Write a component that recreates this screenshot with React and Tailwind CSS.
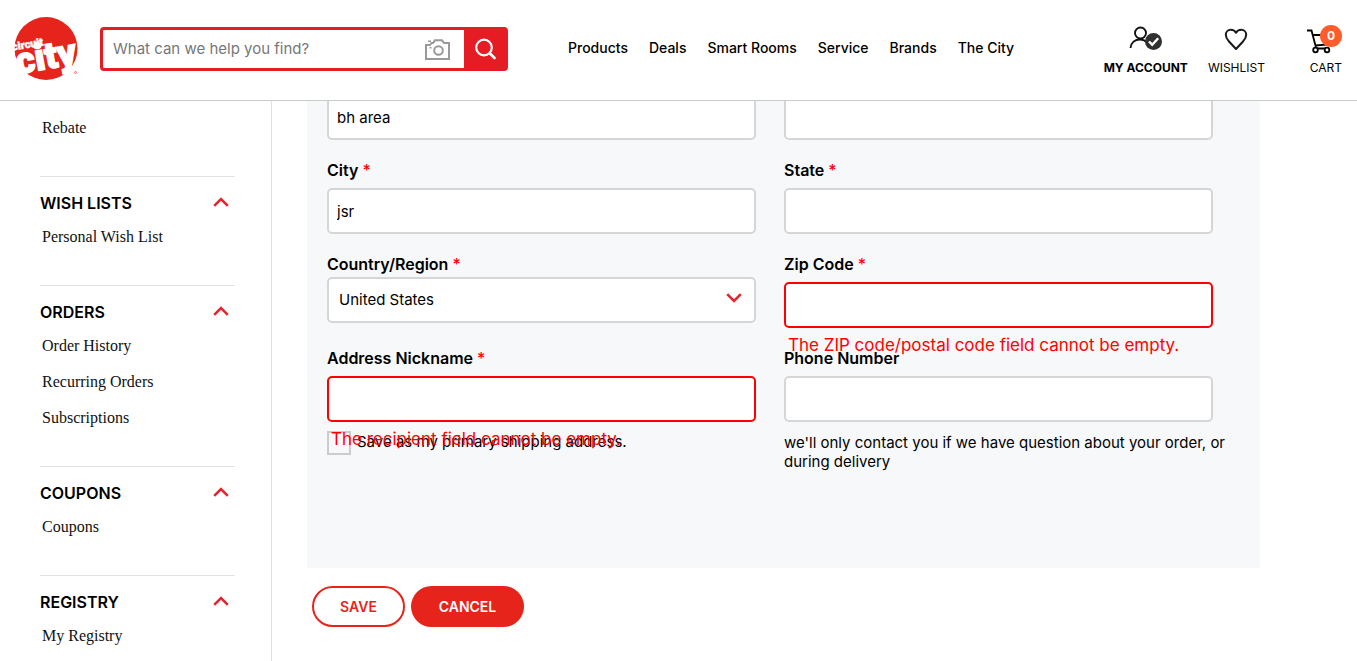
import { useState } from "react";

const navLinks = ["Products", "Deals", "Smart Rooms", "Service", "Brands", "The City"];

const sections = [
  { title: "WISH LISTS", items: ["Personal Wish List"] },
  { title: "ORDERS", items: ["Order History", "Recurring Orders", "Subscriptions"] },
  { title: "COUPONS", items: ["Coupons"] },
  { title: "REGISTRY", items: ["My Registry"] },
];

function Logo() {
  return (
    <svg viewBox="0 0 66 66" className="h-[66px] w-[66px] overflow-visible" role="img" aria-label="Circuit City">
      <circle cx="32" cy="32.5" r="31.5" fill="#e6241b" />
      <g transform="rotate(-10 32 40)" fill="#fff" stroke="#fff" fontFamily="Roboto, 'Liberation Sans', sans-serif" fontWeight="900">
        <text x="0" y="29" fontSize="11" strokeWidth="0.4">circuit</text>
        <text x="1" y="53" fontSize="37" strokeWidth="1.4">city</text>
      </g>
      <circle cx="61.5" cy="56.5" r="1" fill="none" stroke="#e6241b" strokeWidth="0.6" />
    </svg>
  );
}

function Chevron({ up }) {
  return (
    <svg viewBox="0 0 16 10" className="h-[10px] w-4" fill="none" stroke="#e3262e" strokeWidth="2.6" aria-hidden="true">
      <path d={up ? "M1.2 8.8 8 2l6.8 6.8" : "M1.2 1.2 8 8l6.8-6.8"} />
    </svg>
  );
}

function Field({ id, label, required, value = "", error, children }) {
  const [text, setText] = useState(value);
  return (
    <div className="relative">
      {label && (
        <label htmlFor={id} className={`block text-[16px] leading-6 font-semibold ${children ? "mb-px" : "mb-1.5"}`}>
          {label} {required && <span className="font-medium text-[#f00]">*</span>}
        </label>
      )}
      {children || (
        <input
          id={id}
          aria-label={label ? undefined : id}
          value={text}
          onChange={(e) => setText(e.target.value)}
          className={`block h-[46px] w-full rounded-[5px] border-2 bg-white px-2 text-[15px] outline-none ${error ? "border-[#f00]" : "border-[#d5d6d7]"}`}
        />
      )}
      {error && (
        <p className="absolute top-full left-1 z-10 mt-[5px] text-[17px] leading-6 whitespace-nowrap text-[#f00]">{error}</p>
      )}
    </div>
  );
}

function Header() {
  return (
    <header className="relative z-20 flex h-[101px] shrink-0 items-start border-b border-[#c6cbcb] bg-white">
      <a href="#home" className="mt-4 ml-3.5 shrink-0"><Logo /></a>
      <form role="search" className="mt-[27px] ml-5 flex h-11 w-[408px] shrink-0 overflow-hidden rounded border-[3px] border-[#e61c24] bg-[#e61c24]" onSubmit={(e) => e.preventDefault()}>
        <input aria-label="Search" placeholder="What can we help you find?" className="min-w-0 flex-1 bg-white pl-2.5 text-[15px] outline-none placeholder:text-[#777]" />
        <button type="button" aria-label="Search by image" className="bg-white pt-px pr-3.5">
          <svg viewBox="0 0 25 21" className="h-[21px] w-[25px]" fill="none" stroke="#999" strokeWidth="2" aria-hidden="true">
            <path d="M1 6V20H24V4H19L17 1.3H10L8 4H6.500L5 6H1Z" />
            <circle cx="13.500" cy="11.500" r="4.300" />
            <path d="M3 2.200h3M4.500 8.800h2" strokeWidth="1.500" />
          </svg>
        </button>
        <button aria-label="Submit search" className="flex w-[41px] items-center justify-center">
          <svg viewBox="0 0 22 22" className="h-[22px] w-[22px]" fill="none" stroke="#fff" strokeWidth="2.200" strokeLinecap="round" aria-hidden="true">
            <circle cx="10" cy="9.500" r="7.800" />
            <path d="m16 15.500 4.500 4.500" strokeWidth="2.600" />
          </svg>
        </button>
      </form>
      <nav className="mt-9 ml-[60px] flex gap-[21px] text-[14px] leading-6 font-medium whitespace-nowrap">
        {navLinks.map((n) => <a key={n} href="#nav">{n}</a>)}
      </nav>
      <div className="mt-6 mr-[15px] ml-auto flex gap-5 text-[12px] leading-4 whitespace-nowrap">
        <a href="#account" className="flex flex-col items-center gap-1 font-bold">
          <svg viewBox="0 0 34 32" className="h-8 w-[34px]" fill="none" stroke="#111" strokeWidth="1.900" aria-hidden="true">
            <circle cx="11.500" cy="9" r="5.500" />
            <path d="M1.500 24C2 18.500 6 15.500 11 15.500c3 0 5 1 6.500 2.500" />
            <circle cx="24.500" cy="17.500" r="8.500" fill="#2f3130" stroke="none" />
            <path d="m20 17.500 3.200 3.200 6-6.500" stroke="#fff" strokeWidth="2.400" />
          </svg>
          MY ACCOUNT
        </a>
        <a href="#wishlist" className="flex flex-col items-center gap-1">
          <svg viewBox="0 0 24 32" className="h-8 w-6" fill="none" stroke="#1a1a1a" strokeWidth="2" strokeLinejoin="round" aria-hidden="true">
            <path d="M12 25 5 17.500C2.500 14.800 1.800 12.800 1.800 10.800 1.800 7.800 4 5.800 6.800 5.800 9.200 5.800 11 7 12 8.800 13 7 14.800 5.800 17.200 5.800 20 5.800 22.200 7.800 22.200 10.800 22.200 12.800 21.500 14.800 19 17.500Z" />
          </svg>
          WISHLIST
        </a>
        <a href="#cart" className="relative ml-[22px] flex flex-col items-end gap-1">
          <svg viewBox="0 0 35 32" className="h-8 w-[35px]" fill="none" stroke="#000" strokeWidth="1.800" aria-hidden="true">
            <path d="M0 6.500h4.500L9 23.500M6.500 11H24l-2 9.500L8 21.500M7 24.500h13" />
            <circle cx="8.500" cy="26" r="2.300" fill="#fff" />
            <circle cx="20" cy="26" r="2.300" fill="#fff" />
          </svg>
          <span className="absolute top-px right-0 flex h-[22px] w-[22px] items-center justify-center rounded-full bg-[#ff5c2d] text-[12px] font-bold text-white">0</span>
          CART
        </a>
      </div>
    </header>
  );
}

function Sidebar() {
  const item = "flex h-9 items-center pl-0.5 font-['Liberation_Serif',serif] text-[16px] text-[#111]";
  return (
    <aside className="w-[272px] shrink-0 border-r border-[#e1e2e3] pt-[9px] pr-9 pl-10">
      <div className="pb-[30px]"><a href="#rebate" className={item}>Rebate</a></div>
      {sections.map((s) => (
        <section key={s.title} className="border-t border-[#e1e2e3] pb-[30px]">
          <button className="mt-3.5 mb-1 flex h-6 w-full items-center justify-between pr-1.5 text-[16px] font-semibold">
            {s.title}<span className="pb-0.5"><Chevron up /></span>
          </button>
          {s.items.map((i) => <a key={i} href="#item" className={item}>{i}</a>)}
        </section>
      ))}
    </aside>
  );
}

export default function App() {
  return (
    <div className="flex h-screen flex-col overflow-hidden bg-white font-['Inter','Liberation_Sans',sans-serif] text-black">
      <Header />
      <div className="flex min-h-0 flex-1">
        <Sidebar />
        <main className="min-w-0 flex-1 pr-[97px] pl-[35px]">
          <form onSubmit={(e) => e.preventDefault()}>
            <div className="-mt-[7px] grid grid-cols-2 gap-x-7 gap-y-[18px] bg-[#f7f8fa] pr-[47px] pb-[97px] pl-5">
              <Field id="Address line 1" value="bh area" />
              <Field id="Address line 2" />
              <Field id="city" label="City" required value="jsr" />
              <Field id="state" label="State" required />
              <Field id="country" label="Country/Region" required>
                <div className="relative">
                  <select id="country" className="block h-[46px] w-full appearance-none rounded-[5px] border-2 border-[#d5d6d7] bg-white px-2.5 text-[15px] outline-none">
                    <option>United States</option>
                  </select>
                  <span className="pointer-events-none absolute inset-y-0 right-3.5 flex items-center pb-1"><Chevron /></span>
                </div>
              </Field>
              <Field id="zip" label="Zip Code" required error="The ZIP code/postal code field cannot be empty." />
              <div>
                <Field id="nickname" label="Address Nickname" required error="The recipient field cannot be empty." />
                <label className="mt-[9px] flex gap-1.5 text-[15px] leading-[22px]">
                  <input type="checkbox" className="h-6 w-6 shrink-0 appearance-none border-2 border-[#ccc] checked:bg-[#e6241b]" />
                  Save as my primary shipping address.
                </label>
              </div>
              <div>
                <Field id="phone" label="Phone Number" />
                <p className="-mr-4 mt-[11px] text-[15px] leading-[19px]">we'll only contact you if we have question about your order, or during delivery</p>
              </div>
            </div>
            <div className="mt-[18px] ml-[5px] flex gap-1.5 text-[14px] font-semibold">
              <button className="h-[41px] w-[93px] rounded-full border-2 border-[#e6241b] bg-white text-[#e6241b]">SAVE</button>
              <button type="button" className="h-[41px] w-[113px] rounded-full bg-[#e6241b] text-white">CANCEL</button>
            </div>
          </form>
        </main>
      </div>
    </div>
  );
}
